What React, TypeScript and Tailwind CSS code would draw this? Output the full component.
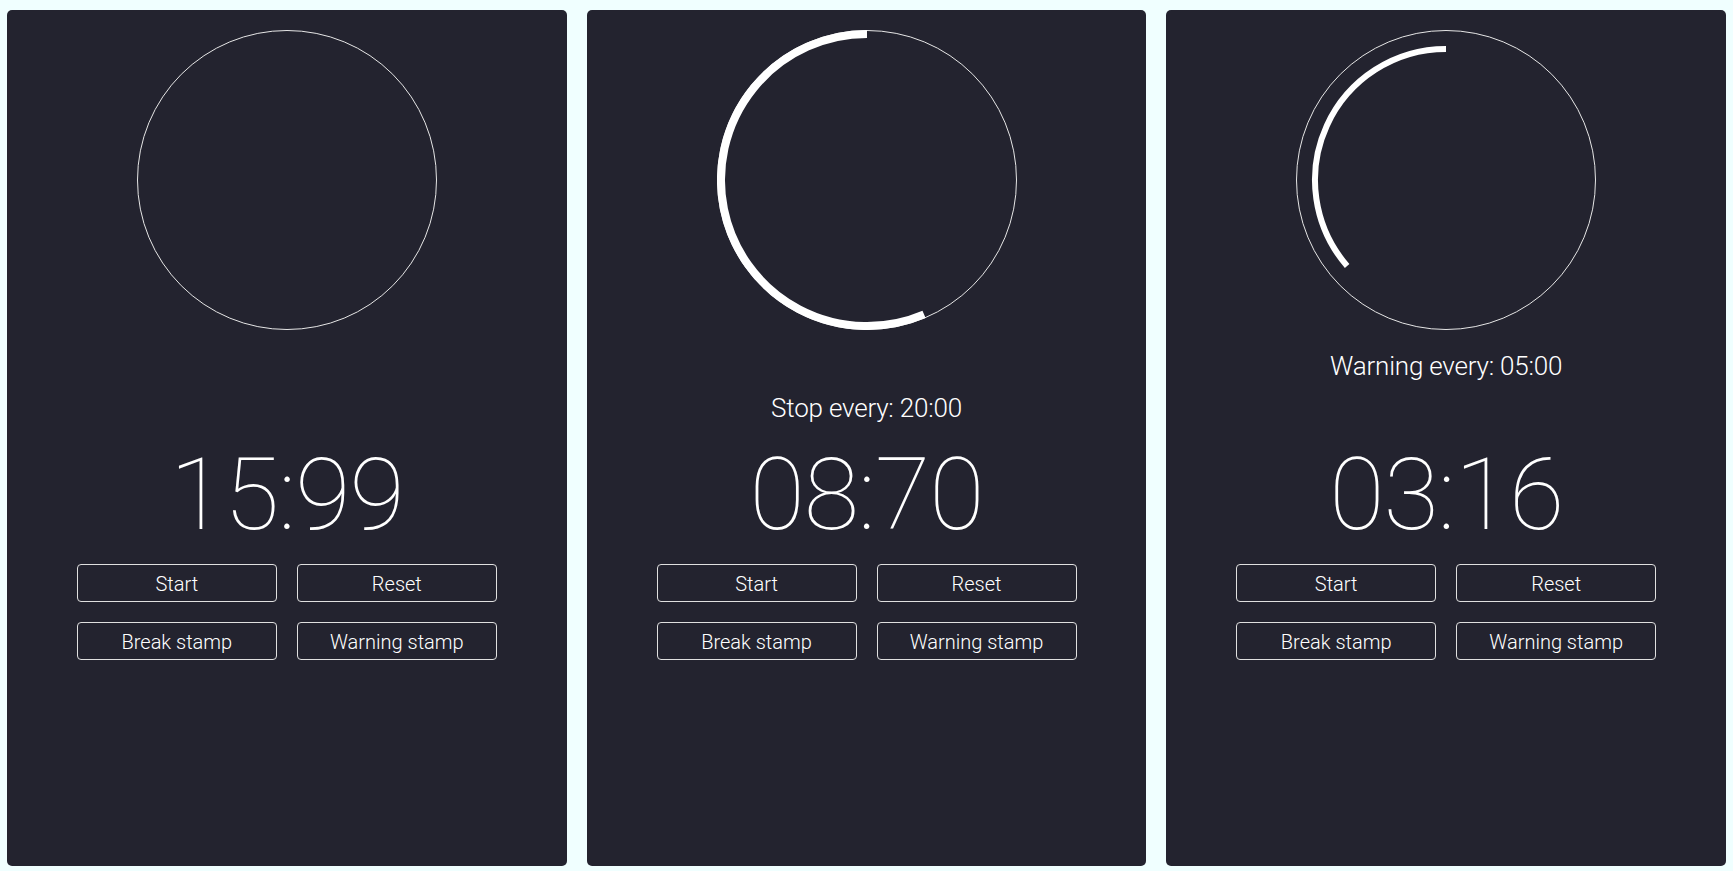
import React from 'react';

type TimerPanelProps = {
  time: string;
  label?: string;
  labelOffset?: string;
  arc?: { radius: number; width: number; angle: number };
};

const arcPath = (r: number, angle: number) => {
  const rad = (angle * Math.PI) / 180;
  const x = 150 - r * Math.sin(rad);
  const y = 150 - r * Math.cos(rad);
  const large = angle > 180 ? 1 : 0;
  return `M 150 ${150 - r} A ${r} ${r} 0 ${large} 0 ${x.toFixed(2)} ${y.toFixed(2)}`;
};

const buttons = ['Start', 'Reset', 'Break stamp', 'Warning stamp'];

const TimerPanel: React.FC<TimerPanelProps> = ({ time, label, labelOffset, arc }) => {
  return (
    <div className="flex-1 h-[856px] rounded-[5px] bg-[#23232f] flex flex-col items-center pt-[20px] text-white">
      <svg width="300" height="300" viewBox="0 0 300 300" className="shrink-0">
        <circle cx="150" cy="150" r="149.5" fill="none" stroke="#e6e6e6" strokeWidth="1" />
        {arc && (
          <path
            d={arcPath(arc.radius, arc.angle)}
            fill="none"
            stroke="#ffffff"
            strokeWidth={arc.width}
            strokeLinecap="butt"
          />
        )}
      </svg>

      <div className="h-[114px] w-full flex flex-col items-center">
        {label && (
          <p className={`${labelOffset} text-[26px] leading-[1.2] font-light tracking-[-0.2px]`}>{label}</p>
        )}
      </div>

      <div className="text-[101px] leading-none font-thin tracking-[-1px]">{time}</div>

      <div className="mt-[19px] grid grid-cols-2 gap-x-5 gap-y-5 w-[420px]">
        {buttons.map((b) => (
          <button
            key={b}
            className="h-[38px] border border-[#e0e0e0] rounded-[4px] text-[20px] font-light leading-none text-white bg-transparent pt-[1px]"
          >
            {b}
          </button>
        ))}
      </div>
    </div>
  );
};

export default function App() {
  return (
    <div
      className="w-full h-[871px] bg-[#f0ffff] flex gap-5 px-[7px] pt-[10px] pb-[5px]"
      style={{ fontFamily: 'Roboto, "Liberation Sans", sans-serif' }}
    >
      <TimerPanel time="15:99" />
      <TimerPanel
        time="08:70"
        label="Stop every: 20:00"
        labelOffset="mt-[63px]"
        arc={{ radius: 146, width: 8, angle: 203 }}
      />
      <TimerPanel
        time="03:16"
        label="Warning every: 05:00"
        labelOffset="mt-[21px]"
        arc={{ radius: 131, width: 6, angle: 131 }}
      />
    </div>
  );
}
